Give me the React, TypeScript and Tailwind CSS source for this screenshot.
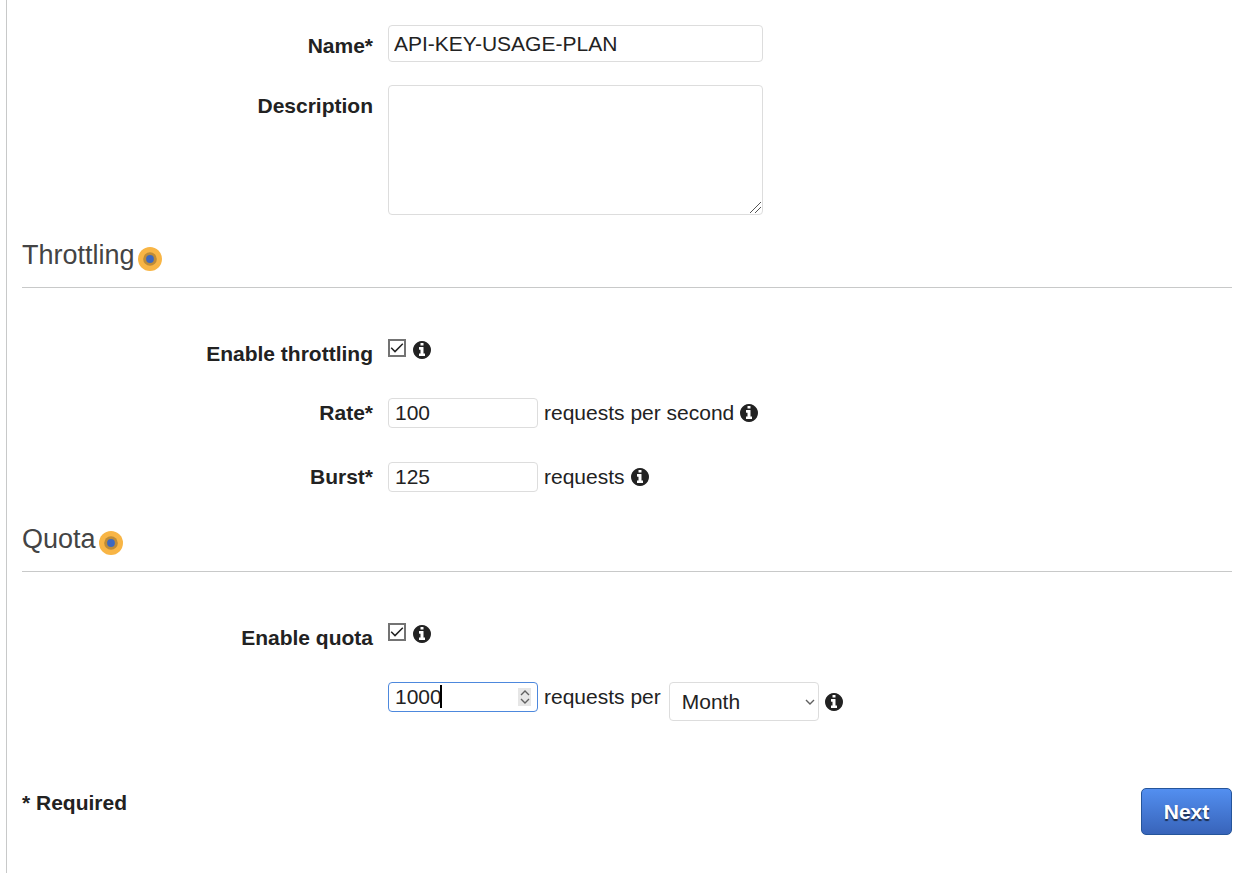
import type { ReactNode } from "react";

const fieldClass =
  "block rounded-[4px] border bg-white text-[21px] leading-6 text-[#222] outline-none";

function Info({ label }: { label: string }) {
  return (
    <svg
      viewBox="0 128 1536 1536"
      role="img"
      aria-label={label}
      fill="currentColor"
      className="size-[18px] shrink-0 text-[#222]"
    >
      <path d="M1024 1376v-160q0-14-9-23t-23-9h-96v-512q0-14-9-23t-23-9h-320q-14 0-23 9t-9 23v160q0 14 9 23t23 9h96v320h-96q-14 0-23 9t-9 23v160q0 14 9 23t23 9h448q14 0 23-9t9-23zm-128-896v-160q0-14-9-23t-23-9h-192q-14 0-23 9t-9 23v160q0 14 9 23t23 9h192q14 0 23-9t9-23zm640 416q0 209-103 385.5t-279.5 279.5-385.5 103-385.5-103-279.5-279.5-103-385.5 103-385.5 279.5-279.5 385.5-103 385.5 103 279.5 279.5 103 385.5z" />
    </svg>
  );
}

function Row({
  label,
  htmlFor,
  tall = false,
  children,
}: {
  label?: string;
  htmlFor?: string;
  tall?: boolean;
  children: ReactNode;
}) {
  return (
    <div className="flex items-start gap-[15px]">
      <div
        className={
          tall
            ? "w-[351px] shrink-0 pt-[9px] text-right"
            : "w-[351px] shrink-0 pt-[3px] text-right"
        }
      >
        {label && (
          <label htmlFor={htmlFor} className="font-bold">
            {label}
          </label>
        )}
      </div>
      <div className="min-w-0 flex-1">{children}</div>
    </div>
  );
}

function SectionHeading({ title }: { title: string }) {
  return (
    <div className="flex items-end gap-[3px] border-b border-[#c8c9c9] pb-4">
      <h2 className="text-[27px] leading-8 text-[#444]">{title}</h2>
      <svg viewBox="0 0 24 24" className="size-6" aria-hidden="true">
        <circle cx="12" cy="12" r="12" fill="#f8b545" />
        <circle cx="12" cy="12" r="6.8" fill="#bd8b38" />
        <circle cx="12" cy="12" r="3.9" fill="#3c68c0" />
      </svg>
    </div>
  );
}

function CheckBox({ id, info }: { id: string; info: string }) {
  return (
    <div className="flex items-start gap-[7px]">
      <span className="relative size-[18px] shrink-0">
        <input
          id={id}
          type="checkbox"
          defaultChecked
          className="peer block size-[18px] appearance-none border-2 border-[#737373] bg-white"
        />
        <svg
          viewBox="0 0 18 18"
          className="pointer-events-none absolute inset-0 hidden size-[18px] peer-checked:block"
          fill="none"
          stroke="#222"
          strokeWidth="1.5"
          aria-hidden="true"
        >
          <path d="M3.2 8.8 7 12.6 14.8 4.8" />
        </svg>
      </span>
      <span className="pt-[2px]">
        <Info label={info} />
      </span>
    </div>
  );
}

function NumberRow({
  id,
  label,
  value,
  unit,
}: {
  id: string;
  label: string;
  value: number;
  unit: string;
}) {
  return (
    <Row label={label} htmlFor={id}>
      <div className="flex items-center gap-[6px]">
        <input
          id={id}
          type="number"
          defaultValue={value}
          className={`${fieldClass} h-[30px] w-[150px] border-[#ddd] px-[6px] [appearance:textfield]`}
        />
        <span>{unit}</span>
        <Info label={`About ${unit}`} />
      </div>
    </Row>
  );
}

function Chevron({ up = false }: { up?: boolean }) {
  return (
    <svg
      viewBox="0 0 10 6"
      className="h-[6px] w-[10px]"
      fill="none"
      stroke="#606060"
      strokeWidth="1.4"
      aria-hidden="true"
    >
      <path d={up ? "M1 5 5 1 9 5" : "M1 1 5 5 9 1"} />
    </svg>
  );
}

export default function App() {
  return (
    <div className="min-h-screen bg-white pl-[6px] font-['Liberation_Sans',Arial,sans-serif] text-[21px] leading-6 text-[#222]">
      <form
        className="min-h-screen border-l border-[#c8c9c9] pt-[25px] pr-3 pb-[38px] pl-[15px]"
        onSubmit={(e) => e.preventDefault()}
      >
        <div className="flex flex-col gap-[23px]">
          <Row label="Name*" htmlFor="name" tall>
            <input
              id="name"
              type="text"
              defaultValue="API-KEY-USAGE-PLAN"
              className={`${fieldClass} h-[37px] w-full max-w-[375px] border-[#ddd] px-[5px]`}
            />
          </Row>
          <Row label="Description" htmlFor="description" tall>
            <div className="relative w-full max-w-[375px]">
              <textarea
                id="description"
                className={`${fieldClass} h-[130px] w-full resize-y border-[#ddd] px-[5px] [&::-webkit-resizer]:bg-transparent`}
              />
              <svg
                viewBox="0 0 11 11"
                className="pointer-events-none absolute right-[2px] bottom-[2px] size-[11px]"
                fill="none"
                stroke="#555"
                aria-hidden="true"
              >
                <path d="M0 11 11 0M5 11 11 5" />
              </svg>
            </div>
          </Row>
        </div>

        <section className="mt-6">
          <SectionHeading title="Throttling" />
          <div className="mt-[51px] flex flex-col">
            <Row label="Enable throttling" htmlFor="throttling">
              <CheckBox id="throttling" info="About throttling" />
            </Row>
            <div className="mt-8 flex flex-col gap-[34px]">
              <NumberRow
                id="rate"
                label="Rate*"
                value={100}
                unit="requests per second"
              />
              <NumberRow
                id="burst"
                label="Burst*"
                value={125}
                unit="requests"
              />
            </div>
          </div>
        </section>

        <section className="mt-[31px]">
          <SectionHeading title="Quota" />
          <div className="mt-[51px] flex flex-col">
            <Row label="Enable quota" htmlFor="quota">
              <CheckBox id="quota" info="About quota" />
            </Row>
            <div className="mt-8">
              <Row>
                <div className="flex items-start">
                  <div className="relative w-[150px] shrink-0">
                    <input
                      type="number"
                      aria-label="Quota requests"
                      defaultValue={1000}
                      className={`${fieldClass} h-[30px] w-full border-[#4d88dd] px-[6px] [appearance:textfield]`}
                    />
                    <span className="pointer-events-none absolute top-[3px] left-[52px] h-[23px] w-[2px] bg-black" />
                    <span className="absolute top-[6px] right-[7px] flex h-[18px] w-[13px] flex-col items-center justify-between bg-[#e6e6e6] py-[2px]">
                      <button type="button" aria-label="Increase">
                        <Chevron up />
                      </button>
                      <button type="button" aria-label="Decrease">
                        <Chevron />
                      </button>
                    </span>
                  </div>
                  <span className="ml-[6px] pt-[3px]">requests per</span>
                  <div className="ml-2 flex items-center gap-[6px]">
                    <div className="relative w-[150px]">
                      <select
                        aria-label="Quota period"
                        defaultValue="Month"
                        className={`${fieldClass} h-[39px] w-full appearance-none border-[#ddd] px-3`}
                      >
                        <option>Day</option>
                        <option>Week</option>
                        <option>Month</option>
                      </select>
                      <span className="pointer-events-none absolute top-0 right-1 flex h-full items-center">
                        <Chevron />
                      </span>
                    </div>
                    <Info label="About quota period" />
                  </div>
                </div>
              </Row>
            </div>
          </div>
        </section>

        <div className="mt-[67px] flex items-start justify-between">
          <p className="pt-[3px] font-bold">* Required</p>
          <button
            type="submit"
            className="h-[47px] w-[91px] rounded-[5px] border border-[#25559b] bg-linear-to-b from-[#538ff0] to-[#3864ba] font-bold text-white [text-shadow:0_2px_1px_#1c2c4a]"
          >
            Next
          </button>
        </div>
      </form>
    </div>
  );
}
